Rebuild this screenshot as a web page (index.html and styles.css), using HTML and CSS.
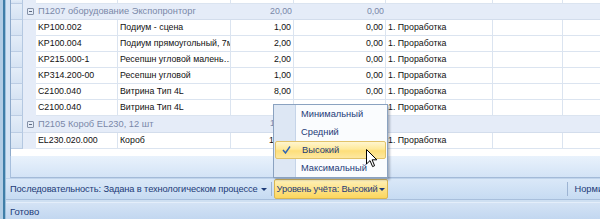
FILE: index.html
```html
<!DOCTYPE html>
<html lang="ru">
<head>
<meta charset="utf-8">
<title>Grid</title>
<link rel="stylesheet" href="styles.css">
</head>
<body>
<div class="window">
  <div class="frame"><span class="f1"></span><span class="f2"></span><span class="f3"></span></div>
  <div class="main">
    <div class="gridwrap">
      <div class="grid">
        <div class="row partial">
          <div class="ind"></div><div class="indent"></div>
          <div class="c"></div><div class="c"></div><div class="c"></div><div class="c"></div><div class="c"></div><div class="c"></div><div class="c last"></div>
        </div>
        <div class="row group">
          <div class="ind"></div>
          <div class="gname"><span class="minus"></span><span>П1207 оборудование Экспопронторг</span></div>
          <div class="gval">20,00</div>
          <div class="gval">0,00</div>
          <div class="grest"></div>
        </div>
        <div class="row">
          <div class="ind"></div><div class="indent"></div>
          <div class="c">KP100.002</div><div class="c">Подиум - сцена</div><div class="c num">1,00</div><div class="c num">0,00</div><div class="c">1. Проработка</div><div class="c"></div><div class="c last"></div>
        </div>
        <div class="row">
          <div class="ind"></div><div class="indent"></div>
          <div class="c">KP100.004</div><div class="c">Подиум прямоугольный, 7м</div><div class="c num">2,00</div><div class="c num">0,00</div><div class="c">1. Проработка</div><div class="c"></div><div class="c last"></div>
        </div>
        <div class="row">
          <div class="ind"></div><div class="indent"></div>
          <div class="c">KP215.000-1</div><div class="c">Ресепшн угловой малень…</div><div class="c num">2,00</div><div class="c num">0,00</div><div class="c">1. Проработка</div><div class="c"></div><div class="c last"></div>
        </div>
        <div class="row">
          <div class="ind"></div><div class="indent"></div>
          <div class="c">KP314.200-00</div><div class="c">Ресепшн угловой</div><div class="c num">1,00</div><div class="c num">0,00</div><div class="c">1. Проработка</div><div class="c"></div><div class="c last"></div>
        </div>
        <div class="row">
          <div class="ind"></div><div class="indent"></div>
          <div class="c">C2100.040</div><div class="c">Витрина Тип 4L</div><div class="c num">8,00</div><div class="c num">0,00</div><div class="c">1. Проработка</div><div class="c"></div><div class="c last"></div>
        </div>
        <div class="row">
          <div class="ind"></div><div class="indent"></div>
          <div class="c">C2100.040</div><div class="c">Витрина Тип 4L</div><div class="c num">1,00</div><div class="c num">0,00</div><div class="c">1. Проработка</div><div class="c"></div><div class="c last"></div>
        </div>
        <div class="row group g2">
          <div class="ind"></div>
          <div class="gname"><span class="minus"></span><span>П2105 Короб EL230, 12 шт</span></div>
          <div class="gval">12,00</div>
          <div class="gval">0,00</div>
          <div class="grest"></div>
        </div>
        <div class="row">
          <div class="ind"></div><div class="indent"></div>
          <div class="c">EL230.020.000</div><div class="c">Короб</div><div class="c num">12,00</div><div class="c num">0,00</div><div class="c">1. Проработка</div><div class="c"></div><div class="c last"></div>
        </div>
        <div class="empty"></div>
      </div>
      <div class="footpanel"></div>
    </div>
    <div class="statusbar">
      <div class="sitem first">Последовательность: Задана в технологическом процессе <span class="arrow"></span></div>
      <div class="ssep"></div>
      <div class="sitem active">Уровень учёта: Высокий <span class="arrow"></span></div>
      <div class="sfill"></div>
      <div class="ssep"></div>
      <div class="sitem">Нормирование</div>
    </div>
    <div class="readybar">Готово</div>
  </div>

  <div class="popup">
    <div class="gutter"></div>
    <div class="items">
      <div class="item">Минимальный</div>
      <div class="item">Средний</div>
      <div class="item sel"><svg class="check" width="9" height="8" viewBox="0 0 9 8"><polyline points="1,4 3.5,7 8,0.5" fill="none" stroke="#2f64b4" stroke-width="1.4"/></svg>Высокий</div>
      <div class="item">Максимальный</div>
    </div>
  </div>
  <svg class="cursor" width="12" height="19" viewBox="0 0 12 19"><path d="M0.5 0.5 L0.5 15 L4 11.6 L6.6 17.6 L8.6 16.7 L6.1 10.8 L10.8 10.8 Z" fill="#fff" stroke="#000" stroke-width="1"/></svg>
</div>
</body>
</html>
```

FILE: styles.css
```css
* { box-sizing: border-box; }
html, body { margin: 0; padding: 0; }
body {
  width: 600px;
  height: 219px;
  overflow: hidden;
  font-family: "Liberation Sans", Arial, sans-serif;
  background: #cfe0f2;
}
.window {
  position: relative;
  display: flex;
  width: 600px;
  height: 219px;
}
.frame {
  display: flex;
  width: 6px;
  flex: none;
}
.f1 { width: 3px; background: #b2cde5; }
.f2 { width: 2px; background: #3f7ea8; }
.f3 { width: 1px; background: #9cc0dc; }
.main {
  flex: 1;
  display: flex;
  flex-direction: column;
  min-width: 0;
}
.gridwrap {
  height: 178px;
  padding-left: 4px;
  background: #d5e4f4;
  display: flex;
  flex-direction: column;
}
.grid {
  height: 156px;
  background: #fff;
  border-left: 1px solid #8eaacb;
  overflow: hidden;
  font-size: 8.8px;
  color: #111;
}
.row {
  display: grid;
  grid-template-columns: 12px 13px 82px 113px 63px 92px 107px 70px 1fr;
  height: 16px;
}
.row.partial { height: 4px; }
.row.g2 { height: 17px; }
.ind {
  background: linear-gradient(#e4edf8, #d6e3f3);
  border-right: 1px solid #b4c8e1;
  border-bottom: 1px solid #bccde4;
}
.indent {
  background: #e5ecf8;
  border-bottom: 1px solid #e5ecf8;
}
.c {
  border-right: 1px solid #dbe4f0;
  border-bottom: 1px solid #dbe4f0;
  padding: 0 2px;
  line-height: 15px;
  white-space: nowrap;
  overflow: hidden;
}
.c.num { text-align: right; padding-right: 2px; }
.c.last { border-right: none; }
.group { color: #7a88a8; }
.group .gname, .group .gval, .group .grest {
  background: #e5ecf8;
  border-bottom: 1px solid #d3ddec;
  line-height: 15px;
  white-space: nowrap;
}
.group .gname { font-size: 9.3px; }
.gname {
  grid-column: 2 / 5;
  display: flex;
  align-items: center;
  padding-left: 4px;
  gap: 4px;
}
.gval { text-align: right; padding-right: 2px; }
.grest { grid-column: 7 / 10; }
.minus {
  width: 7px;
  height: 7px;
  border: 1px solid #8592a8;
  border-radius: 1px;
  position: relative;
  flex: none;
}
.minus::after {
  content: "";
  position: absolute;
  left: 1px; right: 1px; top: 2px;
  height: 1px;
  background: #5d6a80;
}
.empty { height: 8px; background: #fff; border-bottom: 1px solid #a7bfdd; }
.footpanel {
  height: 22px;
  background: linear-gradient(#e9f2fc, #d3e3f6);
  border-left: 1px solid #a7bfdd;
  border-bottom: 1px solid #a3bad8;
}
.statusbar {
  height: 22px;
  display: flex;
  align-items: stretch;
  overflow: hidden;
  background: linear-gradient(#dae8f8, #c6dbf2);
  border-top: 1px solid #c0d4ec;
  border-bottom: 1px solid #a8bfdc;
  font-size: 9.3px;
  color: #1d3b78;
}
.sitem {
  display: flex;
  align-items: center;
  padding: 0 3px 0 4px;
  white-space: nowrap;
  gap: 3px;
  flex: none;
}
.sitem.first {
  letter-spacing: -0.12px;
  padding: 0 2px 0 4px;
}
.sitem.active {
  background: linear-gradient(#fff1b8, #fde38a 50%, #fbd65e);
  border: 1px solid #d9b653;
  border-radius: 2px;
  margin: 0 1px 0 0;
  padding: 0 2px 0 2px;
  letter-spacing: -0.18px;
  gap: 2px;
}
.sfill { flex: none; width: 176px; }
.ssep {
  flex: none;
  width: 1px;
  margin: 3px 2px;
  background: #9db4d3;
}
.arrow {
  width: 0; height: 0;
  border-left: 3px solid transparent;
  border-right: 3px solid transparent;
  border-top: 3px solid #1d3b78;
}
.readybar {
  flex: 1;
  margin-top: 2px;
  background: linear-gradient(#d4e3f5, #c2d7f0);
  border-top: 1px solid #e4eefa;
  font-size: 9.5px;
  color: #1d3b78;
  padding-left: 4px;
  display: flex;
  align-items: center;
}
.popup {
  position: absolute;
  left: 273px;
  top: 104px;
  width: 115px;
  height: 74px;
  display: flex;
  background: #fafcfe;
  border: 1px solid #8aa2c0;
  box-shadow: 2px 2px 2px rgba(60, 70, 90, 0.35);
  font-size: 9.3px;
  color: #1d3b78;
}
.gutter {
  position: absolute;
  left: 0; top: 0; bottom: 0;
  width: 22px;
  background: #dde7f4;
  border-right: 1px solid #c5d4e8;
}
.items {
  position: relative;
  flex: 1;
  display: flex;
  flex-direction: column;
}
.item {
  height: 19px;
  display: flex;
  align-items: center;
  padding-left: 27px;
  position: relative;
  white-space: nowrap;
}
.item.sel {
  margin: 0 1px;
  padding-left: 26px;
  height: 18px;
  background: linear-gradient(#fff6cf, #fee99a 45%, #fdde7a 55%, #fde8a0);
  border: 1px solid #e2c36a;
  border-radius: 2px;
}
.check {
  position: absolute;
  left: 6px;
  top: 4px;
}
.cursor {
  position: absolute;
  left: 366px;
  top: 149px;
}
```
